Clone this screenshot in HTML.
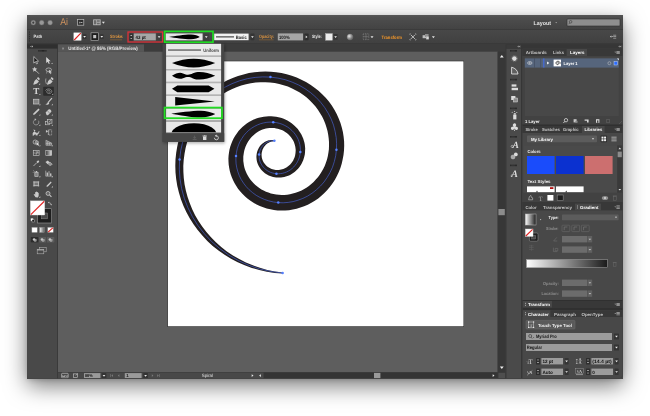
<!DOCTYPE html>
<html lang="en"><head><meta charset="utf-8"><title>Illustrator - Width Profile</title>
<style>
html,body{margin:0;padding:0;background:#ffffff;}
body{width:650px;height:416px;overflow:hidden;position:relative;font-family:"Liberation Sans",sans-serif;}
#shadow{position:absolute;left:27px;top:15px;width:595.5px;height:363.3px;border-radius:4px;background:#464646;
 box-shadow:0 8px 22px rgba(0,0,0,0.52),0 2px 5px rgba(0,0,0,0.16);}
svg{position:absolute;left:0;top:0;will-change:transform;}
svg text{font-family:"Liberation Sans",sans-serif;text-rendering:geometricPrecision;}
</style></head><body>
<div id="shadow"></div>
<svg width="650" height="416" viewBox="0 0 650 416">
<defs><filter id="blur2" x="-20%" y="-20%" width="140%" height="140%"><feGaussianBlur stdDeviation="1.6"/></filter></defs>
<rect x="27.00" y="15.00" width="596.00" height="364.00" fill="#464646" />
<defs><linearGradient id="gt" x1="0" y1="0" x2="0" y2="1"><stop offset="0" stop-color="#565656"/><stop offset="0.15" stop-color="#4e4e4e"/><stop offset="1" stop-color="#434343"/></linearGradient><linearGradient id="gc" x1="0" y1="0" x2="0" y2="1"><stop offset="0" stop-color="#484848"/><stop offset="1" stop-color="#404040"/></linearGradient><linearGradient id="gw" x1="0" y1="0" x2="1" y2="0"><stop offset="0" stop-color="#ffffff"/><stop offset="1" stop-color="#1a1a1a"/></linearGradient><clipPath id="wc"><rect x="27" y="15" width="595.5" height="363.3" rx="4"/></clipPath></defs>
<rect x="27.00" y="15.00" width="596.00" height="14.30" fill="url(#gt)" />
<rect x="27.00" y="29.00" width="596.00" height="0.70" fill="#2c2c2c" />
<rect x="27.00" y="29.60" width="596.00" height="14.40" fill="url(#gc)" />
<rect x="27.00" y="43.60" width="596.00" height="0.60" fill="#303030" />
<g clip-path="url(#wc)">
<rect x="27.00" y="15.00" width="596.00" height="364.00" fill="#464646" />
<rect x="27.00" y="15.00" width="596.00" height="14.30" fill="url(#gt)" />
<rect x="27.00" y="29.00" width="596.00" height="0.70" fill="#2c2c2c" />
<rect x="27.00" y="29.60" width="596.00" height="14.40" fill="url(#gc)" />
<rect x="27.00" y="43.60" width="596.00" height="0.60" fill="#303030" />
<circle cx="33.30" cy="22.70" r="2.40" fill="#989898" stroke="#6a6a6a" stroke-width="0.40" />
<circle cx="41.70" cy="22.70" r="2.40" fill="#989898" stroke="#6a6a6a" stroke-width="0.40" />
<circle cx="50.10" cy="22.70" r="2.40" fill="#989898" stroke="#6a6a6a" stroke-width="0.40" />
<circle cx="33.30" cy="22.70" r="1.10" fill="#3e3e3e" stroke="none" stroke-width="1.00" />
<text x="60.20" y="25.10" font-size="9.80" fill="#cf935f" font-weight="normal" text-anchor="start" textLength="7.8" lengthAdjust="spacingAndGlyphs">Ai</text>
<rect x="77.40" y="19.40" width="6.40" height="5.80" fill="#2e2e2e" stroke="#bdbdbd" stroke-width="0.7"/>
<rect x="79.40" y="21.80" width="0.80" height="1.60" fill="#d0d0d0" />
<rect x="80.60" y="22.20" width="1.80" height="0.80" fill="#d0d0d0" />
<rect x="93.20" y="19.40" width="7.40" height="5.80" fill="#bdbdbd" />
<rect x="94.00" y="20.20" width="2.40" height="4.20" fill="#6a6a6a" />
<rect x="97.00" y="20.20" width="2.80" height="1.60" fill="#6a6a6a" />
<rect x="97.00" y="22.60" width="2.80" height="1.80" fill="#6a6a6a" />
<path d="M101.90 21.85h3.00l-1.50 1.90z" fill="#e0e0e0" stroke="none" stroke-width="1.00" />
<text x="533.60" y="24.50" font-size="5.60" fill="#e4e4e4" font-weight="bold" text-anchor="start" textLength="17.4" lengthAdjust="spacingAndGlyphs">Layout</text>
<path d="M555.30 22.25h1.80l-0.90 1.10z" fill="#bdbdbd" stroke="none" stroke-width="1.00" />
<rect x="567.00" y="19.00" width="53.00" height="7.00" fill="#8e8e8e" rx="0.8" stroke="#2e2e2e" stroke-width="0.6"/>
<circle cx="570.60" cy="21.80" r="1.30" fill="none" stroke="#3a3a3a" stroke-width="0.60" />
<line x1="569.70" y1="22.80" x2="568.80" y2="24.20" stroke="#3a3a3a" stroke-width="0.60" />
<rect x="29.00" y="31.50" width="0.80" height="1.20" fill="#2a2a2a" />
<rect x="29.00" y="33.70" width="0.80" height="1.20" fill="#2a2a2a" />
<rect x="29.00" y="35.90" width="0.80" height="1.20" fill="#2a2a2a" />
<rect x="29.00" y="38.10" width="0.80" height="1.20" fill="#2a2a2a" />
<rect x="29.00" y="40.30" width="0.80" height="1.20" fill="#2a2a2a" />
<text x="33.60" y="38.10" font-size="4.60" fill="#e4e4e4" font-weight="bold" text-anchor="start" textLength="8.7" lengthAdjust="spacingAndGlyphs">Path</text>
<rect x="73.80" y="32.80" width="7.40" height="7.60" fill="#ffffff" stroke="#cfcfcf" stroke-width="0.4"/>
<line x1="74.20" y1="40.00" x2="80.80" y2="33.20" stroke="#e02020" stroke-width="1.10" />
<rect x="82.80" y="34.20" width="3.60" height="4.80" fill="#343434" rx="0.6"/>
<path d="M83.25 35.95h2.70l-1.35 1.70z" fill="#ececec" stroke="none" stroke-width="1.00" />
<rect x="91.00" y="32.80" width="7.40" height="7.60" fill="#1e1e1e" stroke="#b4b4b4" stroke-width="0.6"/>
<rect x="93.20" y="35.00" width="3.00" height="3.20" fill="#c4c4c4" />
<rect x="100.00" y="34.20" width="3.60" height="4.80" fill="#343434" rx="0.6"/>
<path d="M100.45 35.95h2.70l-1.35 1.70z" fill="#ececec" stroke="none" stroke-width="1.00" />
<text x="110.00" y="38.40" font-size="4.70" fill="#dc9440" font-weight="bold" text-anchor="start" textLength="13.4" lengthAdjust="spacingAndGlyphs">Stroke:</text>
<line x1="110.00" y1="39.80" x2="122.00" y2="39.80" stroke="#a8702e" stroke-width="0.50" />
<rect x="129.60" y="33.40" width="3.20" height="7.00" fill="#2e2e2e" rx="0.5"/>
<path d="M130.20 35.89h2.00l-1.00 -1.20z" fill="#dddddd" stroke="none" stroke-width="1.00" />
<path d="M130.20 37.91h2.00l-1.00 1.20z" fill="#dddddd" stroke="none" stroke-width="1.00" />
<rect x="133.80" y="33.40" width="22.00" height="7.00" fill="#a6a6a6" />
<text x="135.60" y="38.70" font-size="4.80" fill="#141414" font-weight="bold" text-anchor="start" textLength="10.2" lengthAdjust="spacingAndGlyphs">43 pt</text>
<rect x="157.00" y="33.60" width="4.20" height="6.60" fill="#3e3e3e" rx="0.6"/>
<path d="M157.75 36.25h2.70l-1.35 1.70z" fill="#ececec" stroke="none" stroke-width="1.00" />
<rect x="128.00" y="32.00" width="34.60" height="10.00" fill="none" stroke="#dc3038" stroke-width="1.3"/>
<rect x="165.60" y="33.40" width="37.00" height="7.00" fill="#e6e6e6" />
<path d="M169.0 36.9 C175 36.2 185 34.5 191 34.6 C195 34.8 198 35.9 199.8 36.9 C198 37.9 195 39.1 191 39.2 C185 39.3 175 37.6 169.0 36.9Z" fill="#000000" stroke="none" stroke-width="1.00" />
<rect x="203.60" y="33.60" width="5.40" height="6.60" fill="#3e3e3e" rx="0.6"/>
<path d="M204.95 36.25h2.70l-1.35 1.70z" fill="#ececec" stroke="none" stroke-width="1.00" />
<rect x="164.60" y="31.40" width="48.40" height="10.80" fill="none" stroke="#1fdc22" stroke-width="1.7"/>
<rect x="214.20" y="33.60" width="34.40" height="6.60" fill="#f2f2f2" />
<line x1="216.00" y1="36.90" x2="234.00" y2="36.90" stroke="#111111" stroke-width="0.90" />
<text x="235.80" y="38.70" font-size="4.70" fill="#222222" font-weight="bold" text-anchor="start" textLength="11" lengthAdjust="spacingAndGlyphs">Basic</text>
<rect x="250.40" y="33.60" width="4.00" height="6.60" fill="#343434" rx="0.6"/>
<path d="M251.05 36.25h2.70l-1.35 1.70z" fill="#ececec" stroke="none" stroke-width="1.00" />
<text x="259.00" y="38.40" font-size="4.70" fill="#dc9440" font-weight="bold" text-anchor="start" textLength="15" lengthAdjust="spacingAndGlyphs">Opacity:</text>
<line x1="259.00" y1="39.80" x2="273.60" y2="39.80" stroke="#a8702e" stroke-width="0.50" />
<rect x="277.80" y="33.40" width="25.20" height="7.00" fill="#a6a6a6" />
<text x="279.00" y="38.70" font-size="4.80" fill="#141414" font-weight="bold" text-anchor="start" textLength="10.6" lengthAdjust="spacingAndGlyphs">100%</text>
<rect x="304.40" y="33.60" width="4.20" height="6.60" fill="#2e2e2e" rx="0.6"/>
<path d="M305.70 35.60v2.60l1.80 -1.30z" fill="#e0e0e0" stroke="none" stroke-width="1.00" />
<text x="312.00" y="38.40" font-size="4.70" fill="#e4e4e4" font-weight="bold" text-anchor="start" textLength="9.6" lengthAdjust="spacingAndGlyphs">Style:</text>
<rect x="325.60" y="33.60" width="6.80" height="6.60" fill="#ececec" stroke="#bdbdbd" stroke-width="0.4"/>
<rect x="333.60" y="34.00" width="4.00" height="5.80" fill="#343434" rx="0.6"/>
<path d="M334.25 36.25h2.70l-1.35 1.70z" fill="#ececec" stroke="none" stroke-width="1.00" />
<defs><radialGradient id="sph" cx="0.35" cy="0.35" r="0.7"><stop offset="0" stop-color="#e8e8e8"/><stop offset="1" stop-color="#5a5a5a"/></radialGradient></defs>
<circle cx="350.00" cy="37.00" r="2.90" fill="url(#sph)" stroke="#9a9a9a" stroke-width="0.30" />
<rect x="363.20" y="33.80" width="5.60" height="5.80" fill="none" stroke="#9a9a9a" stroke-width="0.5" stroke-dasharray="1 0.8"/>
<line x1="366.00" y1="33.80" x2="366.00" y2="39.60" stroke="#9a9a9a" stroke-width="0.40" />
<line x1="363.20" y1="36.70" x2="368.80" y2="36.70" stroke="#9a9a9a" stroke-width="0.40" />
<path d="M370.50 36.25h3.00l-1.50 1.90z" fill="#e0e0e0" stroke="none" stroke-width="1.00" />
<text x="381.60" y="38.50" font-size="4.80" fill="#f0962a" font-weight="bold" text-anchor="start" textLength="20.4" lengthAdjust="spacingAndGlyphs">Transform</text>
<line x1="410.90" y1="34.90" x2="414.90" y2="38.90" stroke="#d8d8d8" stroke-width="0.80" />
<line x1="414.90" y1="34.90" x2="410.90" y2="38.90" stroke="#d8d8d8" stroke-width="0.80" />
<path d="M409.8 34.8v-1h1M415 33.8h1v1M416 39v1h-1M410.8 40h-1v-1" fill="none" stroke="#c8c8c8" stroke-width="0.50" />
<rect x="422.60" y="35.20" width="3.40" height="3.00" fill="#bdbdbd" />
<rect x="425.00" y="34.00" width="3.60" height="3.00" fill="#8e8e8e" />
<rect x="426.20" y="36.60" width="2.60" height="2.80" fill="#d8d8d8" />
<path d="M431.90 36.25h3.00l-1.50 1.90z" fill="#e0e0e0" stroke="none" stroke-width="1.00" />
<path d="M611.40 35.40v2.40l-1.60 -1.20z" fill="#c8c8c8" stroke="none" stroke-width="1.00" />
<rect x="611.60" y="36.20" width="1.20" height="0.80" fill="#c8c8c8" />
<rect x="613.20" y="34.80" width="3.00" height="0.70" fill="#b0b0b0" />
<rect x="613.20" y="36.30" width="3.00" height="0.70" fill="#b0b0b0" />
<rect x="613.20" y="37.80" width="3.00" height="0.70" fill="#b0b0b0" />
<rect x="27.00" y="44.20" width="30.60" height="335.00" fill="#494949" />
<rect x="27.00" y="44.20" width="30.60" height="4.40" fill="#2f2f2f" />
<rect x="57.40" y="44.20" width="0.60" height="335.00" fill="#333333" />
<path d="M30.2 46.4l1.2 -1v2zM31.8 46.4l1.2 -1v2z" fill="#b8b8b8" stroke="none" stroke-width="1.00" />
<rect x="38.40" y="50.00" width="0.80" height="1.60" fill="#1c1c1c" />
<rect x="39.60" y="50.00" width="0.80" height="1.60" fill="#1c1c1c" />
<rect x="40.80" y="50.00" width="0.80" height="1.60" fill="#1c1c1c" />
<rect x="42.00" y="50.00" width="0.80" height="1.60" fill="#1c1c1c" />
<rect x="43.20" y="50.00" width="0.80" height="1.60" fill="#1c1c1c" />
<rect x="44.40" y="50.00" width="0.80" height="1.60" fill="#1c1c1c" />
<rect x="45.60" y="50.00" width="0.80" height="1.60" fill="#1c1c1c" />
<g transform="scale(0.860)" opacity="0.92">
<path d="M39.29 65.75l0 7.6l1.9 -1.7l1.3 2.7l1.2 -0.5l-1.3 -2.6l2.4 -0.2z" fill="#161616" stroke="#ececec" stroke-width="0.75" />
<path d="M53.73 66.15l0 7.2l1.8 -1.6l1.2 2.6l1.1 -0.5l-1.2 -2.5l2.3 -0.2z" fill="#e4e4e4" stroke="none" stroke-width="1.00" />
<path d="M61.03 74.55h-1.6l1.6 -1.6z" fill="#e0e0e0" stroke="none" stroke-width="1.00" />
<line x1="41.49" y1="81.90" x2="45.29" y2="85.70" stroke="#d6d6d6" stroke-width="0.90" />
<path d="M40.29 77.50l0.9 2.0l2.2 0.3l-1.7 1.4l0.5 2.2l-1.9 -1.2l-1.9 1.2l0.5 -2.2l-1.7 -1.4l2.2 -0.3z" fill="#d6d6d6" stroke="none" stroke-width="1.00" />
<ellipse cx="56.63" cy="81.10" rx="3.2" ry="2.1" fill="none" stroke="#d6d6d6" stroke-width="0.8"/>
<path d="M56.83 80.90l0 4.6l1.2 -1l0.9 1.8l0.8 -0.4l-0.9 -1.7l1.6 -0.1z" fill="#d6d6d6" stroke="none" stroke-width="1.00" />
<line x1="54.63" y1="82.90" x2="54.23" y2="85.50" stroke="#d6d6d6" stroke-width="0.60" />
<path d="M40.09 94.06l2.2 -2.2l3 3l-2.2 2.2l-3.8 1.6l-0.6 -0.6zM42.89 91.06l1.4 -1.4l2.2 2.2l-1.4 1.4z" fill="#d6d6d6" stroke="none" stroke-width="1.00" />
<path d="M46.69 98.46h-1.6l1.6 -1.6z" fill="#e0e0e0" stroke="none" stroke-width="1.00" />
<path d="M56.03 94.06l2.2 -2.2l3 3l-2.2 2.2l-3.8 1.6l-0.6 -0.6zM58.83 91.06l1.4 -1.4l2.2 2.2l-1.4 1.4z" fill="#d6d6d6" stroke="none" stroke-width="1.00" />
<path d="M53.43 91.26q-1.2 3 0.6 6.4" fill="none" stroke="#d6d6d6" stroke-width="0.70" />
<text x="42.09" y="109.71" font-size="10.50" fill="#e2e2e2" font-weight="bold" text-anchor="middle" style="font-family:Liberation Serif,serif">T</text>
<path d="M46.89 110.61h-1.6l1.6 -1.6z" fill="#e0e0e0" stroke="none" stroke-width="1.00" />
<rect x="50.23" y="100.81" width="12.40" height="10.40" fill="#2a2a2a" rx="0.8"/>
<path d="M56.25 106.62L56.23 106.73L56.25 106.85L56.31 106.97L56.40 107.09L56.53 107.19L56.70 107.27L56.89 107.32L57.11 107.34L57.34 107.33L57.56 107.27L57.78 107.17L57.98 107.03L58.14 106.85L58.26 106.64L58.32 106.41L58.33 106.16L58.26 105.91L58.13 105.66L57.94 105.44L57.68 105.24L57.36 105.08L57.01 104.98L56.62 104.93L56.22 104.95L55.81 105.04L55.43 105.19L55.09 105.41L54.80 105.68L54.57 106.01L54.43 106.37L54.39 106.76L54.44 107.15L54.59 107.54L54.85 107.91L55.20 108.23L55.63 108.50L56.13 108.69L56.68 108.81L57.26 108.84L57.85 108.77L58.41 108.60L58.94 108.35L59.40 108.00L59.77 107.59L60.04 107.11L60.19 106.59L60.20 106.05L60.08 105.51L59.82 104.99L59.42 104.51L58.91 104.10L58.30 103.78L57.61 103.55L56.87 103.44L56.09 103.44L55.33 103.58L54.60 103.83L53.94 104.20L53.38 104.68L52.94 105.24" fill="none" stroke="#c2c2c2" stroke-width="0.70" />
<path d="M61.83 110.21h-1.6l1.6 -1.6z" fill="#e0e0e0" stroke="none" stroke-width="1.00" />
<rect x="38.89" y="115.36" width="6.40" height="5.60" fill="#8a8a8a" stroke="#dcdcdc" stroke-width="0.7"/>
<path d="M46.89 122.36h-1.6l1.6 -1.6z" fill="#e0e0e0" stroke="none" stroke-width="1.00" />
<line x1="60.43" y1="114.16" x2="56.03" y2="118.96" stroke="#d6d6d6" stroke-width="1.30" />
<path d="M55.73 118.56q-0.4 2.2 -3.0 2.8q1.6 0.8 3.4 0.2q1.4 -0.8 1.0 -2.4z" fill="#d6d6d6" stroke="none" stroke-width="1.00" />
<path d="M61.43 122.36h-1.6l1.6 -1.6z" fill="#e0e0e0" stroke="none" stroke-width="1.00" />
<path d="M39.09 131.72l5.6 -5.6l1.4 1.4l-5.6 5.6l-2 0.6z" fill="#d6d6d6" stroke="none" stroke-width="1.00" />
<path d="M46.89 134.32h-1.6l1.6 -1.6z" fill="#e0e0e0" stroke="none" stroke-width="1.00" />
<path d="M53.03 130.72l3.4 -3.4q1 -0.8 2 0.1l1 1q0.8 1 0 1.9l-3.4 3.4q-1 0.8 -1.9 0z" fill="#d6d6d6" stroke="none" stroke-width="1.00" />
<line x1="55.23" y1="128.92" x2="58.03" y2="131.92" stroke="#5a5a5a" stroke-width="0.60" />
<path d="M61.43 134.32h-1.6l1.6 -1.6z" fill="#e0e0e0" stroke="none" stroke-width="1.00" />
<path d="M41.89 138.87a3.2 3.2 0 1 0 2.8 1.5" fill="none" stroke="#b4b4b4" stroke-width="0.80" />
<path d="M42.29 138.87l-1.8 -1.4l0 2.8z" fill="#c4c4c4" stroke="none" stroke-width="1.00" />
<path d="M46.89 146.27h-1.6l1.6 -1.6z" fill="#e0e0e0" stroke="none" stroke-width="1.00" />
<rect x="53.03" y="141.47" width="4.40" height="3.60" fill="none" stroke="#d6d6d6" stroke-width="0.7"/>
<rect x="55.03" y="138.87" width="5.40" height="4.40" fill="#5a5a5a" stroke="#d6d6d6" stroke-width="0.7"/>
<line x1="56.83" y1="142.07" x2="59.43" y2="139.67" stroke="#d6d6d6" stroke-width="0.70" />
<path d="M61.43 146.27h-1.6l1.6 -1.6z" fill="#e0e0e0" stroke="none" stroke-width="1.00" />
<path d="M38.29 154.62q1.6 -2.8 3.4 -0.4q1.8 2.2 3.8 -1.6q-0.6 4.4 -3.6 3.6q-1.8 -0.8 -3.6 1.6z" fill="#d6d6d6" stroke="#d6d6d6" stroke-width="0.50" />
<path d="M38.89 150.42l2.4 1.2l-1.4 1.6z" fill="#d6d6d6" stroke="none" stroke-width="1.00" />
<path d="M42.49 154.62l1.6 2.6l-2.6 0.2z" fill="#d6d6d6" stroke="none" stroke-width="1.00" />
<path d="M46.89 158.22h-1.6l1.6 -1.6z" fill="#e0e0e0" stroke="none" stroke-width="1.00" />
<path d="M53.43 151.02l2.6 1.6l-2.6 1.6z" fill="#d6d6d6" stroke="none" stroke-width="1.00" />
<rect x="56.83" y="150.82" width="3.20" height="6.20" fill="none" stroke="#d6d6d6" stroke-width="0.7" stroke-dasharray="1 0.6"/>
<line x1="56.23" y1="150.82" x2="56.23" y2="157.02" stroke="#d6d6d6" stroke-width="0.70" />
<circle cx="40.89" cy="165.18" r="2.40" fill="none" stroke="#d6d6d6" stroke-width="0.80" />
<circle cx="42.89" cy="165.78" r="2.00" fill="#8a8a8a" stroke="#d6d6d6" stroke-width="0.60" />
<path d="M42.69 165.58l0 3.6l1 -0.8l0.7 1.4l0.7 -0.3l-0.7 -1.4l1.3 -0.1z" fill="#f0f0f0" stroke="none" stroke-width="1.00" />
<path d="M46.89 170.18h-1.6l1.6 -1.6z" fill="#e0e0e0" stroke="none" stroke-width="1.00" />
<path d="M53.43 168.98l0 -6l6.6 3.4l0 2.6zM55.43 168.98l0 -4.6M57.63 168.98l0 -3.4M53.43 166.78l6.6 -0.2" fill="#7a7a7a" stroke="#d6d6d6" stroke-width="0.60" />
<path d="M61.43 170.18h-1.6l1.6 -1.6z" fill="#e0e0e0" stroke="none" stroke-width="1.00" />
<rect x="38.69" y="175.13" width="6.80" height="5.60" fill="none" stroke="#d6d6d6" stroke-width="0.7"/>
<path d="M41.89 175.13q1 2.8 0 5.6M38.69 177.73q3.4 1 6.8 0" fill="none" stroke="#d6d6d6" stroke-width="0.60" />
<rect x="42.89" y="176.13" width="1.60" height="1.40" fill="#c0c0c0" />
<defs><linearGradient id="tg" x1="0" y1="0" x2="1" y2="0"><stop offset="0" stop-color="#3a3a3a"/><stop offset="1" stop-color="#f0f0f0"/></linearGradient></defs>
<rect x="53.23" y="175.13" width="6.80" height="5.60" fill="url(#tg)" stroke="#d6d6d6" stroke-width="0.7"/>
<line x1="38.89" y1="193.08" x2="42.49" y2="189.48" stroke="#d6d6d6" stroke-width="0.90" />
<path d="M42.29 188.28l1.4 -1.4q1 -0.6 1.6 0q0.6 0.8 0 1.6l-1.4 1.4z" fill="#d6d6d6" stroke="none" stroke-width="1.00" />
<path d="M46.89 194.08h-1.6l1.6 -1.6z" fill="#e0e0e0" stroke="none" stroke-width="1.00" />
<path d="M52.83 188.28l2.8 -1.6l2.6 2.6l-2.8 1.6z" fill="#d6d6d6" stroke="none" stroke-width="1.00" />
<path d="M55.43 190.08l2.8 -1.6l2.6 2.6l-2.8 1.6z" fill="#9a9a9a" stroke="#e0e0e0" stroke-width="0.50" />
<rect x="40.49" y="200.64" width="3.80" height="4.60" fill="#8a8a8a" stroke="#d6d6d6" stroke-width="0.7"/>
<rect x="41.49" y="198.84" width="1.80" height="1.60" fill="#d6d6d6" />
<circle cx="39.09" cy="198.64" r="0.50" fill="#d6d6d6" stroke="none" stroke-width="1.00" />
<circle cx="38.49" cy="200.44" r="0.50" fill="#d6d6d6" stroke="none" stroke-width="1.00" />
<circle cx="39.89" cy="199.64" r="0.45" fill="#d6d6d6" stroke="none" stroke-width="1.00" />
<path d="M46.89 206.04h-1.6l1.6 -1.6z" fill="#e0e0e0" stroke="none" stroke-width="1.00" />
<path d="M53.23 198.44v6.4h7" fill="none" stroke="#d6d6d6" stroke-width="0.70" />
<rect x="54.23" y="200.64" width="1.50" height="3.80" fill="#d6d6d6" />
<rect x="56.23" y="199.04" width="1.50" height="5.40" fill="#9a9a9a" />
<rect x="58.23" y="201.64" width="1.50" height="2.80" fill="#d6d6d6" />
<path d="M61.43 206.04h-1.6l1.6 -1.6z" fill="#e0e0e0" stroke="none" stroke-width="1.00" />
<rect x="39.49" y="211.59" width="5.20" height="4.40" fill="#7a7a7a" stroke="#d6d6d6" stroke-width="0.7"/>
<path d="M38.29 211.59h7.6M38.29 215.99h7.6M39.49 210.39v6.8M44.69 210.39v6.8" fill="none" stroke="#d6d6d6" stroke-width="0.50" />
<path d="M53.63 216.59l5.4 -5.4l1 1l-4.6 5z" fill="#d6d6d6" stroke="none" stroke-width="1.00" />
<path d="M61.43 217.99h-1.6l1.6 -1.6z" fill="#e0e0e0" stroke="none" stroke-width="1.00" />
<path d="M41.29 229.34q-1.6 -2.4 -2.2 -3.4q0.4 -0.8 1.2 0l0.6 0.6l0 -3q0.5 -0.7 1 0l0.1 -0.6q0.5 -0.6 1 0l0.1 0.4q0.5 -0.5 1 0.1l0 0.8q0.6 -0.4 0.9 0.2l0 3q-0.2 1.4 -1 2.2z" fill="#d6d6d6" stroke="none" stroke-width="1.00" />
<path d="M46.89 229.94h-1.6l1.6 -1.6z" fill="#e0e0e0" stroke="none" stroke-width="1.00" />
<circle cx="55.83" cy="224.94" r="2.30" fill="#6a6a6a" stroke="#d6d6d6" stroke-width="0.90" />
<line x1="57.53" y1="226.64" x2="59.83" y2="228.94" stroke="#d6d6d6" stroke-width="1.20" />
</g>
<rect x="37.30" y="208.70" width="14.40" height="14.30" fill="#1e1e1e" stroke="#9a9a9a" stroke-width="0.6"/>
<rect x="41.60" y="213.00" width="5.80" height="5.80" fill="#494949" stroke="#8a8a8a" stroke-width="0.5"/>
<rect x="30.40" y="200.90" width="14.30" height="14.10" fill="#ffffff" stroke="#e0e0e0" stroke-width="0.4"/>
<line x1="30.80" y1="214.60" x2="44.30" y2="201.30" stroke="#e02828" stroke-width="1.20" />
<path d="M48.6 202.6q2.4 -0.2 2.6 2.2" fill="none" stroke="#bdbdbd" stroke-width="0.60" />
<path d="M49.2 201.6l-1.4 1l1.4 1zM50.2 204.2l1 1.4l1 -1.4z" fill="#bdbdbd" stroke="none" stroke-width="1.00" />
<rect x="30.80" y="218.40" width="2.40" height="2.40" fill="#ffffff" />
<rect x="32.00" y="219.80" width="2.20" height="2.20" fill="#1c1c1c" stroke="#d0d0d0" stroke-width="0.4"/>
<rect x="31.90" y="227.40" width="5.30" height="5.00" fill="#ffffff" stroke="#9a9a9a" stroke-width="0.4"/>
<rect x="39.70" y="227.40" width="5.00" height="5.00" fill="url(#tg2)" stroke="#9a9a9a" stroke-width="0.4"/>
<defs><linearGradient id="tg2" x1="0" y1="0" x2="1" y2="0"><stop offset="0" stop-color="#f0f0f0"/><stop offset="1" stop-color="#555"/></linearGradient></defs>
<rect x="47.80" y="227.40" width="5.40" height="5.00" fill="#ffffff" stroke="#9a9a9a" stroke-width="0.4"/>
<line x1="48.20" y1="232.00" x2="52.80" y2="227.80" stroke="#e02828" stroke-width="1.10" />
<rect x="30.70" y="237.00" width="23.70" height="5.60" fill="#5a5a5a" rx="0.8"/>
<rect x="30.70" y="237.00" width="7.80" height="5.60" fill="#2c2c2c" rx="0.8"/>
<line x1="38.60" y1="237.00" x2="38.60" y2="242.60" stroke="#3a3a3a" stroke-width="0.50" />
<line x1="46.50" y1="237.00" x2="46.50" y2="242.60" stroke="#3a3a3a" stroke-width="0.50" />
<circle cx="34.10" cy="239.50" r="1.30" fill="#c8c8c8" stroke="none" stroke-width="1.00" />
<rect x="34.30" y="239.50" width="2.00" height="1.90" fill="#9a9a9a" stroke="#d0d0d0" stroke-width="0.3"/>
<circle cx="42.00" cy="239.50" r="1.30" fill="#c8c8c8" stroke="none" stroke-width="1.00" />
<rect x="42.20" y="239.50" width="2.00" height="1.90" fill="#9a9a9a" stroke="#d0d0d0" stroke-width="0.3"/>
<circle cx="49.90" cy="239.50" r="1.30" fill="#c8c8c8" stroke="none" stroke-width="1.00" />
<rect x="50.10" y="239.50" width="2.00" height="1.90" fill="#9a9a9a" stroke="#d0d0d0" stroke-width="0.3"/>
<rect x="39.60" y="247.40" width="6.60" height="4.40" fill="#494949" stroke="#b4b4b4" stroke-width="0.55"/>
<rect x="37.20" y="249.40" width="6.60" height="4.40" fill="#494949" stroke="#b4b4b4" stroke-width="0.55"/>
<rect x="37.20" y="249.40" width="6.60" height="1.00" fill="#b4b4b4" />
<rect x="58.00" y="44.20" width="448.00" height="7.60" fill="#3c3c3c" />
<rect x="58.00" y="44.40" width="86.00" height="7.40" fill="#565656" />
<text x="63.00" y="49.60" font-size="4.60" fill="#bdbdbd" font-weight="normal" text-anchor="middle" >×</text>
<text x="68.20" y="49.80" font-size="4.90" fill="#e6e6e6" font-weight="bold" text-anchor="start" textLength="69.6" lengthAdjust="spacingAndGlyphs">Untitled-1* @ 86% (RGB/Preview)</text>
<rect x="58.00" y="51.70" width="439.80" height="321.00" fill="#5e5e5e" />
<rect x="167.40" y="60.80" width="296.60" height="266.00" fill="#1e1e1e" />
<rect x="167.90" y="61.30" width="295.60" height="265.00" fill="#ffffff" />
<rect x="497.80" y="51.70" width="7.90" height="328.00" fill="#373737" />
<rect x="497.50" y="51.70" width="0.50" height="328.00" fill="#404040" />
<path d="M499.90 57.40h3.80l-1.90 -2.40z" fill="#f0f0f0" stroke="none" stroke-width="1.00" />
<path d="M499.90 366.60h3.80l-1.90 2.40z" fill="#f0f0f0" stroke="none" stroke-width="1.00" />
<rect x="498.40" y="209.00" width="6.40" height="6.20" fill="#8c8c8c" />
<rect x="498.40" y="372.80" width="6.80" height="5.60" fill="#4e4e4e" />
<rect x="58.00" y="372.50" width="439.80" height="6.20" fill="#484848" />
<rect x="58.00" y="372.10" width="439.80" height="0.50" fill="#333333" />
<rect x="263.60" y="372.50" width="234.20" height="6.20" fill="#343434" />
<rect x="374.00" y="372.90" width="6.40" height="5.40" fill="#9a9a9a" />
<path d="M251.70 374.20v2.80l1.80 -1.40z" fill="#e8e8e8" stroke="none" stroke-width="1.00" />
<path d="M260.90 374.20v2.80l-1.80 -1.40z" fill="#e8e8e8" stroke="none" stroke-width="1.00" />
<path d="M492.70 374.20v2.80l1.80 -1.40z" fill="#e8e8e8" stroke="none" stroke-width="1.00" />
<text x="201.80" y="377.30" font-size="4.60" fill="#e0e0e0" font-weight="normal" text-anchor="start" textLength="11.2" lengthAdjust="spacingAndGlyphs">Spiral</text>
<rect x="61.60" y="373.30" width="6.60" height="4.60" fill="none" rx="0.8" stroke="#d0d0d0" stroke-width="0.6"/>
<text x="64.90" y="377.10" font-size="2.60" fill="#d0d0d0" font-weight="bold" text-anchor="middle" >GPU</text>
<rect x="73.40" y="373.90" width="4.20" height="3.80" fill="none" stroke="#c8c8c8" stroke-width="0.6"/>
<path d="M75.6 375.5l2.4 -2.2" fill="none" stroke="#c8c8c8" stroke-width="0.60" />
<rect x="84.00" y="373.10" width="16.40" height="5.00" fill="#9a9a9a" />
<text x="85.00" y="377.30" font-size="4.40" fill="#1a1a1a" font-weight="bold" text-anchor="start" textLength="7.6" lengthAdjust="spacingAndGlyphs">86%</text>
<rect x="101.60" y="373.10" width="4.80" height="5.00" fill="#343434" rx="0.6"/>
<path d="M102.65 374.95h2.70l-1.35 1.70z" fill="#ececec" stroke="none" stroke-width="1.00" />
<rect x="110.40" y="374.10" width="0.60" height="3.00" fill="#7a7a7a" />
<path d="M113.00 374.30v2.60l-1.60 -1.30z" fill="#7a7a7a" stroke="none" stroke-width="1.00" />
<path d="M119.40 374.30v2.60l-1.60 -1.30z" fill="#7a7a7a" stroke="none" stroke-width="1.00" />
<rect x="124.80" y="373.10" width="16.80" height="5.00" fill="#9a9a9a" />
<text x="126.20" y="377.30" font-size="4.40" fill="#1a1a1a" font-weight="bold" text-anchor="start" >1</text>
<rect x="143.20" y="373.10" width="4.80" height="5.00" fill="#343434" rx="0.6"/>
<path d="M144.25 374.95h2.70l-1.35 1.70z" fill="#ececec" stroke="none" stroke-width="1.00" />
<path d="M151.80 374.30v2.60l1.60 -1.30z" fill="#7a7a7a" stroke="none" stroke-width="1.00" />
<path d="M157.20 374.30v2.60l1.60 -1.30z" fill="#7a7a7a" stroke="none" stroke-width="1.00" />
<rect x="159.20" y="374.10" width="0.60" height="3.00" fill="#7a7a7a" />
<path d="M282.7 272.5L274.9 271.4L267.3 269.9L259.9 267.8L252.8 265.3L245.9 262.4L239.2 259.1L232.9 255.4L226.9 251.4L221.2 247.0L215.9 242.3L211.0 237.3L206.4 232.1L202.2 226.6L198.5 221.0L195.1 215.2L192.2 209.2L189.7 203.1L187.6 197.0L185.9 190.8L184.6 184.6L183.8 178.3L183.4 172.1L183.3 166.0L183.7 159.9L184.5 153.9L185.6 148.0L187.1 142.3L188.9 136.8L191.0 131.4L193.5 126.2L196.3 121.3L199.4 116.6L202.7 112.2L206.3 108.0L210.1 104.1L214.1 100.5L218.3 97.2L222.6 94.3L227.1 91.6L231.7 89.3L236.4 87.3L241.2 85.6L246.0 84.3L250.8 83.3L255.7 82.6L260.5 82.2L265.3 82.2L270.0 82.5L274.7 83.1L279.2 84.0L283.6 85.2L287.9 86.6L292.1 88.4L296.0 90.4L299.8 92.6L303.4 95.0L306.7 97.6L309.9 100.4L312.8 103.4L315.5 106.5L317.9 109.8L320.1 113.2L322.1 116.6L323.8 120.1L325.3 123.7L326.5 127.4L327.5 131.0L328.2 134.7L328.7 138.4L329.0 142.0L329.0 145.6L328.9 149.2L328.4 152.7L327.8 156.2L327.0 159.5L325.9 162.8L324.7 165.9L323.2 168.9L321.6 171.8L319.9 174.6L317.9 177.2L315.8 179.6L313.6 181.9L311.3 184.0L308.9 186.0L306.4 187.7L303.8 189.3L301.1 190.7L298.4 191.8L295.6 192.8L292.8 193.6L290.0 194.2L287.2 194.7L284.4 194.9L281.6 195.0L278.9 194.8L276.2 194.5L273.5 194.1L270.9 193.4L268.4 192.6L266.0 191.7L263.6 190.6L261.4 189.4L259.3 188.0L257.3 186.6L255.4 185.0L253.6 183.3L252.0 181.6L250.5 179.7L249.1 177.8L247.9 175.8L246.8 173.7L245.8 171.6L245.0 169.5L244.4 167.4L243.9 165.2L243.6 163.1L243.3 160.9L243.3 158.7L243.3 156.6L243.6 154.5L243.9 152.5L244.3 150.5L244.9 148.5L245.6 146.6L246.4 144.8L247.3 143.0L248.3 141.3L249.4 139.7L250.5 138.2L251.8 136.7L253.2 135.4L254.6 134.2L256.1 133.0L257.6 132.0L259.2 131.1L260.8 130.3L262.5 129.6L264.2 129.0L265.9 128.6L267.6 128.3L269.4 128.1L271.1 128.0L272.8 128.0L274.5 128.1L276.1 128.4L277.8 128.7L279.3 129.2L280.9 129.7L282.4 130.3L283.8 131.1L285.2 131.9L286.4 132.8L287.7 133.8L288.8 134.8L289.9 135.9L290.8 137.0L291.7 138.2L292.5 139.5L293.3 140.8L293.9 142.1L294.4 143.4L294.8 144.8L295.2 146.2L295.4 147.5L295.6 148.9L295.7 150.3L295.6 151.7L295.5 153.0L295.3 154.3L295.1 155.6L294.7 156.9L294.3 158.1L293.7 159.3L293.2 160.4L292.5 161.5L291.8 162.5L291.0 163.5L290.2 164.4L289.3 165.3L288.4 166.0L287.4 166.8L286.4 167.4L285.4 168.0L284.4 168.5L283.3 168.9L282.2 169.2L281.1 169.5L280.0 169.7L278.9 169.9L277.8 169.9L276.7 169.9L275.7 169.9L274.6 169.7L273.6 169.5L272.6 169.2L271.6 168.9L270.6 168.5L269.7 168.0L268.8 167.5L268.0 167.0L267.2 166.4L266.4 165.7L265.7 165.0L265.1 164.3L264.5 163.5L263.9 162.7L263.4 161.9L263.0 161.1L262.6 160.2L262.3 159.3L262.0 158.4L261.8 157.5L261.7 156.6L261.6 155.7L261.6 154.8L261.6 153.9L261.7 153.0L261.9 152.1L262.1 151.3L262.3 150.4L262.6 149.6L263.0 148.8L263.4 148.0L263.8 147.3L264.3 146.6L264.8 145.9L265.4 145.2L266.0 144.6L266.7 144.1L267.3 143.6L268.0 143.1L268.8 142.7L269.5 142.3L270.3 142.0L271.1 141.7L271.9 141.5L272.7 141.4L273.5 141.3L274.4 141.2L274.4 140.2L273.5 140.1L272.6 140.0L271.7 140.0L270.8 140.0L269.8 140.2L268.9 140.3L267.9 140.6L267.0 140.9L266.1 141.3L265.1 141.7L264.2 142.3L263.4 142.9L262.5 143.5L261.7 144.2L260.9 145.0L260.2 145.8L259.5 146.8L258.9 147.7L258.4 148.7L257.9 149.8L257.4 150.9L257.1 152.0L256.8 153.2L256.6 154.4L256.5 155.6L256.4 156.9L256.5 158.2L256.6 159.4L256.8 160.7L257.1 162.0L257.5 163.2L258.0 164.5L258.6 165.7L259.3 166.9L260.0 168.1L260.8 169.2L261.7 170.3L262.7 171.3L263.8 172.3L264.9 173.2L266.1 174.0L267.4 174.8L268.7 175.4L270.1 176.0L271.6 176.6L273.1 177.0L274.6 177.3L276.2 177.5L277.7 177.6L279.3 177.6L281.0 177.5L282.6 177.3L284.2 177.0L285.8 176.6L287.4 176.1L289.0 175.4L290.5 174.7L292.0 173.8L293.5 172.8L294.9 171.8L296.2 170.6L297.5 169.3L298.7 168.0L299.8 166.5L300.8 165.0L301.7 163.4L302.5 161.7L303.3 159.9L303.9 158.1L304.4 156.3L304.8 154.4L305.0 152.4L305.1 150.4L305.2 148.4L305.0 146.4L304.8 144.4L304.4 142.4L303.8 140.4L303.2 138.4L302.3 136.4L301.4 134.5L300.3 132.7L299.1 130.9L297.8 129.1L296.3 127.5L294.8 125.9L293.1 124.4L291.3 123.0L289.4 121.7L287.4 120.6L285.3 119.5L283.1 118.6L280.8 117.8L278.5 117.2L276.1 116.7L273.7 116.4L271.2 116.2L268.7 116.2L266.2 116.4L263.7 116.7L261.2 117.2L258.7 117.8L256.2 118.6L253.7 119.6L251.3 120.8L249.0 122.1L246.7 123.6L244.5 125.3L242.4 127.1L240.4 129.0L238.5 131.1L236.8 133.4L235.2 135.8L233.7 138.3L232.4 140.9L231.3 143.7L230.3 146.5L229.5 149.4L229.0 152.4L228.6 155.5L228.4 158.6L228.5 161.7L228.7 164.8L229.2 168.0L229.8 171.1L230.7 174.2L231.8 177.3L233.1 180.3L234.6 183.2L236.3 186.1L238.2 188.9L240.3 191.5L242.6 194.1L245.1 196.5L247.7 198.7L250.5 200.8L253.5 202.7L256.6 204.5L259.8 206.0L263.2 207.3L266.7 208.4L270.3 209.3L273.9 210.0L277.6 210.4L281.4 210.6L285.2 210.5L289.0 210.2L292.8 209.6L296.6 208.7L300.4 207.6L304.1 206.3L307.8 204.7L311.4 202.8L314.8 200.7L318.2 198.4L321.4 195.8L324.4 193.0L327.3 190.0L330.0 186.8L332.6 183.3L334.9 179.7L336.9 175.9L338.8 172.0L340.4 167.9L341.7 163.7L342.7 159.3L343.5 154.9L344.0 150.4L344.2 145.8L344.1 141.2L343.6 136.6L342.9 132.0L341.8 127.4L340.4 122.8L338.7 118.4L336.7 114.0L334.4 109.7L331.8 105.6L328.9 101.6L325.7 97.8L322.2 94.2L318.5 90.8L314.6 87.7L310.4 84.7L306.0 82.1L301.4 79.7L296.7 77.6L291.8 75.8L286.7 74.3L281.5 73.1L276.2 72.2L270.9 71.7L265.4 71.5L259.9 71.7L254.4 72.2L248.9 73.1L243.5 74.4L238.0 76.0L232.7 78.0L227.4 80.3L222.3 83.0L217.3 86.1L212.5 89.5L207.9 93.3L203.5 97.3L199.3 101.7L195.4 106.4L191.8 111.4L188.5 116.7L185.5 122.2L182.9 127.9L180.6 133.8L178.7 140.0L177.3 146.3L176.2 152.7L175.5 159.2L175.3 165.8L175.5 172.5L176.2 179.2L177.3 185.9L178.9 192.6L180.9 199.2L183.4 205.7L186.3 212.0L189.7 218.2L193.5 224.3L197.7 230.1L202.3 235.6L207.3 240.9L212.7 245.9L218.5 250.5L224.6 254.8L231.0 258.7L237.7 262.2L244.7 265.2L251.9 267.9L259.3 270.0L266.9 271.7L274.7 272.9L282.6 273.5Z" fill="#231f20" stroke="none" stroke-width="1.00" />
<path d="M282.6 273.0L270.9 271.5L259.6 268.9L248.8 265.3L238.5 260.6L228.8 255.1L219.9 248.7L211.7 241.6L204.4 233.8L197.9 225.5L192.4 216.7L187.8 207.5L184.2 198.1L181.6 188.5L180.0 178.8L179.3 169.1L179.6 159.5L180.8 150.2L182.9 141.1L185.8 132.4L189.5 124.2L194.0 116.5L199.1 109.3L204.7 102.8L211.0 96.9L217.6 91.7L224.7 87.3L232.0 83.7L239.6 80.8L247.3 78.7L255.1 77.4L262.8 76.9L270.4 77.1L277.9 78.1L285.2 79.7L292.1 82.1L298.7 85.0L304.9 88.6L310.7 92.7L315.9 97.2L320.6 102.2L324.7 107.5L328.2 113.2L331.2 119.1L333.5 125.1L335.1 131.3L336.2 137.5L336.6 143.7L336.4 149.8L335.7 155.8L334.3 161.6L332.5 167.2L330.1 172.4L327.2 177.4L324.0 182.0L320.3 186.2L316.3 189.9L312.1 193.2L307.6 196.1L302.9 198.4L298.0 200.2L293.1 201.6L288.1 202.4L283.1 202.8L278.2 202.6L273.5 202.0L268.8 200.9L264.4 199.4L260.1 197.5L256.2 195.3L252.5 192.6L249.1 189.7L246.1 186.5L243.5 183.1L241.2 179.5L239.3 175.7L237.9 171.9L236.8 167.9L236.1 163.9L235.9 160.0L236.0 156.0L236.5 152.2L237.3 148.5L238.5 144.9L240.0 141.5L241.9 138.4L243.9 135.4L246.3 132.7L248.8 130.3L251.6 128.2L254.5 126.4L257.5 124.9L260.6 123.7L263.7 122.9L266.9 122.3L270.1 122.1L273.2 122.2L276.3 122.6L279.3 123.3L282.1 124.2L284.9 125.5L287.4 126.9L289.8 128.6L291.9 130.5L293.8 132.5L295.5 134.7L297.0 137.0L298.2 139.4L299.1 141.9L299.8 144.4L300.2 147.0L300.4 149.5L300.3 152.0L300.0 154.5L299.5 156.9L298.7 159.2L297.7 161.3L296.6 163.4L295.2 165.2L293.7 167.0L292.1 168.5L290.3 169.9L288.5 171.0L286.5 172.0L284.6 172.7L282.5 173.3L280.5 173.6L278.5 173.8L276.5 173.7L274.5 173.5L272.6 173.0L270.7 172.4L269.0 171.6L267.4 170.7L265.9 169.6L264.5 168.4L263.3 167.1L262.2 165.7L261.3 164.2L260.5 162.7L259.9 161.1L259.4 159.5L259.2 157.8L259.1 156.2L259.1 154.6L259.3 153.0L259.7 151.5L260.1 150.0L260.8 148.6L261.5 147.3L262.4 146.1L263.3 145.0L264.4 144.0L265.5 143.2L266.7 142.4L267.9 141.8L269.2 141.3L270.5 141.0L271.8 140.8L273.1 140.7L274.4 140.7" fill="none" stroke="#4f6ff5" stroke-width="0.55" />
<circle cx="282.63" cy="273.02" r="1.25" fill="#5580ff" stroke="none" stroke-width="1.00" />
<circle cx="179.62" cy="159.55" r="1.25" fill="#5580ff" stroke="none" stroke-width="1.00" />
<circle cx="270.44" cy="77.10" r="1.25" fill="#5580ff" stroke="none" stroke-width="1.00" />
<circle cx="336.43" cy="149.79" r="1.25" fill="#5580ff" stroke="none" stroke-width="1.00" />
<circle cx="278.25" cy="202.61" r="1.25" fill="#5580ff" stroke="none" stroke-width="1.00" />
<circle cx="235.97" cy="156.04" r="1.25" fill="#5580ff" stroke="none" stroke-width="1.00" />
<circle cx="273.25" cy="122.20" r="1.25" fill="#5580ff" stroke="none" stroke-width="1.00" />
<circle cx="300.33" cy="152.04" r="1.25" fill="#5580ff" stroke="none" stroke-width="1.00" />
<circle cx="276.45" cy="173.72" r="1.25" fill="#5580ff" stroke="none" stroke-width="1.00" />
<circle cx="259.10" cy="154.60" r="1.25" fill="#5580ff" stroke="none" stroke-width="1.00" />
<circle cx="274.40" cy="140.71" r="1.25" fill="#5580ff" stroke="none" stroke-width="1.00" />
<rect x="505.70" y="44.20" width="117.30" height="335.00" fill="#363636" />
<rect x="506.40" y="44.20" width="14.60" height="4.60" fill="#3a3a3a" />
<rect x="506.40" y="48.80" width="14.60" height="331.00" fill="#4a4a4a" />
<path d="M517.4 46.4l1.2 -1v2zM519 46.4l1.2 -1v2z" fill="#b8b8b8" stroke="none" stroke-width="1.00" />
<path d="M618.4 46.4l1.2 -1v2zM620 46.4l1.2 -1v2z" fill="#b8b8b8" stroke="none" stroke-width="1.00" />
<rect x="510.20" y="50.00" width="0.80" height="1.60" fill="#222222" />
<rect x="511.40" y="50.00" width="0.80" height="1.60" fill="#222222" />
<rect x="512.60" y="50.00" width="0.80" height="1.60" fill="#222222" />
<rect x="513.80" y="50.00" width="0.80" height="1.60" fill="#222222" />
<rect x="515.00" y="50.00" width="0.80" height="1.60" fill="#222222" />
<rect x="516.20" y="50.00" width="0.80" height="1.60" fill="#222222" />
<circle cx="514.40" cy="58.60" r="2.30" fill="#dcdcdc" stroke="none" stroke-width="1.00" />
<circle cx="514.40" cy="58.60" r="3.10" fill="none" stroke="#8a8a8a" stroke-width="0.90" stroke-dasharray="0.9 0.9" opacity="0.8"/>
<path d="M511.6 67.2v6.8h6.4q-0.6 -5.2 -6.4 -6.8z" fill="#606060" stroke="#dcdcdc" stroke-width="0.90" />
<rect x="510.20" y="78.80" width="0.80" height="1.60" fill="#222222" />
<rect x="511.40" y="78.80" width="0.80" height="1.60" fill="#222222" />
<rect x="512.60" y="78.80" width="0.80" height="1.60" fill="#222222" />
<rect x="513.80" y="78.80" width="0.80" height="1.60" fill="#222222" />
<rect x="515.00" y="78.80" width="0.80" height="1.60" fill="#222222" />
<rect x="516.20" y="78.80" width="0.80" height="1.60" fill="#222222" />
<rect x="511.60" y="84.40" width="4.80" height="2.20" fill="#dcdcdc" />
<rect x="511.60" y="87.80" width="6.40" height="2.40" fill="#dcdcdc" />
<rect x="511.20" y="96.00" width="4.20" height="4.00" fill="#dcdcdc" />
<rect x="513.40" y="98.00" width="4.20" height="4.00" fill="#8e8e8e" stroke="#dcdcdc" stroke-width="0.5"/>
<rect x="510.20" y="107.60" width="0.80" height="1.60" fill="#222222" />
<rect x="511.40" y="107.60" width="0.80" height="1.60" fill="#222222" />
<rect x="512.60" y="107.60" width="0.80" height="1.60" fill="#222222" />
<rect x="513.80" y="107.60" width="0.80" height="1.60" fill="#222222" />
<rect x="515.00" y="107.60" width="0.80" height="1.60" fill="#222222" />
<rect x="516.20" y="107.60" width="0.80" height="1.60" fill="#222222" />
<rect x="513.20" y="114.60" width="3.20" height="4.80" fill="#dcdcdc" />
<rect x="513.80" y="113.20" width="2.00" height="1.40" fill="#dcdcdc" />
<circle cx="512.20" cy="112.20" r="0.50" fill="#dcdcdc" stroke="none" stroke-width="1.00" />
<circle cx="514.60" cy="111.60" r="0.50" fill="#dcdcdc" stroke="none" stroke-width="1.00" />
<circle cx="516.80" cy="112.40" r="0.50" fill="#dcdcdc" stroke="none" stroke-width="1.00" />
<text x="514.50" y="130.80" font-size="10.50" fill="#dcdcdc" font-weight="normal" text-anchor="middle" style="font-family:DejaVu Sans,sans-serif">♣</text>
<rect x="510.20" y="136.00" width="0.80" height="1.60" fill="#222222" />
<rect x="511.40" y="136.00" width="0.80" height="1.60" fill="#222222" />
<rect x="512.60" y="136.00" width="0.80" height="1.60" fill="#222222" />
<rect x="513.80" y="136.00" width="0.80" height="1.60" fill="#222222" />
<rect x="515.00" y="136.00" width="0.80" height="1.60" fill="#222222" />
<rect x="516.20" y="136.00" width="0.80" height="1.60" fill="#222222" />
<text x="515.60" y="147.60" font-size="9.60" fill="#dcdcdc" font-weight="bold" text-anchor="middle" style="font-family:Liberation Serif,serif" font-style="italic">A</text>
<circle cx="512.20" cy="146.40" r="1.10" fill="none" stroke="#dcdcdc" stroke-width="0.50" />
<circle cx="515.80" cy="154.40" r="1.90" fill="#dcdcdc" stroke="none" stroke-width="1.00" />
<circle cx="513.00" cy="157.00" r="2.00" fill="#a8a8a8" stroke="#dcdcdc" stroke-width="0.40" />
<rect x="510.20" y="164.60" width="0.80" height="1.60" fill="#222222" />
<rect x="511.40" y="164.60" width="0.80" height="1.60" fill="#222222" />
<rect x="512.60" y="164.60" width="0.80" height="1.60" fill="#222222" />
<rect x="513.80" y="164.60" width="0.80" height="1.60" fill="#222222" />
<rect x="515.00" y="164.60" width="0.80" height="1.60" fill="#222222" />
<rect x="516.20" y="164.60" width="0.80" height="1.60" fill="#222222" />
<text x="514.60" y="177.20" font-size="10.00" fill="#dcdcdc" font-weight="bold" text-anchor="middle" style="font-family:Liberation Serif,serif" font-style="italic">A</text>
<path d="M511.4 176.6q-0.8 -1.8 0.8 -2.2" fill="none" stroke="#dcdcdc" stroke-width="0.50" />
<rect x="522.40" y="48.80" width="100.60" height="331.00" fill="#484848" />
<rect x="522.40" y="49.00" width="100.60" height="7.00" fill="#383838" />
<rect x="566.60" y="49.00" width="20.40" height="7.00" fill="#484848" />
<text x="525.80" y="54.40" font-size="4.40" fill="#c6c6c6" font-weight="bold" text-anchor="start" textLength="21" lengthAdjust="spacingAndGlyphs">Artboards</text>
<text x="553.00" y="54.40" font-size="4.40" fill="#c6c6c6" font-weight="bold" text-anchor="start" textLength="11" lengthAdjust="spacingAndGlyphs">Links</text>
<text x="570.00" y="54.40" font-size="4.40" fill="#ffffff" font-weight="bold" text-anchor="start" textLength="14.4" lengthAdjust="spacingAndGlyphs">Layers</text>
<path d="M614.50 51.80h1.40l-0.70 1.00z" fill="#c8c8c8" stroke="none" stroke-width="1.00" />
<rect x="616.40" y="51.00" width="3.40" height="0.60" fill="#c8c8c8" />
<rect x="616.40" y="52.20" width="3.40" height="0.60" fill="#c8c8c8" />
<rect x="616.40" y="53.40" width="3.40" height="0.60" fill="#c8c8c8" />
<rect x="522.40" y="56.00" width="100.60" height="68.40" fill="#424242" />
<rect x="524.80" y="57.20" width="94.00" height="58.80" fill="#484848" />
<rect x="524.80" y="58.40" width="94.00" height="9.20" fill="#56657c" />
<rect x="534.00" y="58.40" width="0.50" height="9.20" fill="#3a4456" />
<rect x="540.60" y="58.40" width="0.50" height="9.20" fill="#3a4456" />
<ellipse cx="529.8" cy="63" rx="2.2" ry="1.4" fill="none" stroke="#e0e0e0" stroke-width="0.6"/>
<circle cx="529.80" cy="63.00" r="0.70" fill="#e0e0e0" stroke="none" stroke-width="1.00" />
<rect x="543.40" y="58.40" width="0.90" height="9.20" fill="#3c6cff" />
<path d="M547.10 61.50v3.00l2.20 -1.50z" fill="#ffffff" stroke="none" stroke-width="1.00" />
<rect x="553.60" y="59.60" width="7.40" height="6.80" fill="#ffffff" />
<path d="M557.4 63.2c0.2 -0.8 1.2 -0.8 1.4 0c0.2 1 -1 1.8 -2 1.2c-1.2 -0.8 -1 -2.6 0.4 -3.0c1.6 -0.5 3 0.6 3 2.2" fill="none" stroke="#222" stroke-width="0.80" />
<text x="563.60" y="64.90" font-size="4.40" fill="#ffffff" font-weight="bold" text-anchor="start" textLength="14" lengthAdjust="spacingAndGlyphs">Layer 1</text>
<circle cx="609.40" cy="63.20" r="1.50" fill="none" stroke="#c8c8c8" stroke-width="0.50" />
<rect x="614.00" y="61.40" width="3.40" height="3.60" fill="#2a6cff" stroke="#dfe8ff" stroke-width="0.4"/>
<path d="M618.8 58.4v1.8l-1.8 -1.8z" fill="#ffffff" stroke="none" stroke-width="1.00" />
<text x="525.00" y="122.60" font-size="4.40" fill="#f0f0f0" font-weight="bold" text-anchor="start" textLength="14.6" lengthAdjust="spacingAndGlyphs">1 Layer</text>
<circle cx="566.00" cy="120.20" r="1.70" fill="none" stroke="#e8e8e8" stroke-width="0.70" />
<line x1="564.80" y1="121.40" x2="563.40" y2="123.00" stroke="#e8e8e8" stroke-width="0.80" />
<rect x="573.60" y="119.20" width="3.00" height="3.20" fill="#c8c8c8" />
<rect x="575.40" y="120.80" width="2.20" height="2.00" fill="#888" />
<path d="M584.6 119.4h4v3.2h-1.6v-1.8h-2.4z" fill="#d8d8d8" stroke="none" stroke-width="1.00" />
<rect x="596.00" y="119.20" width="3.40" height="3.60" fill="#d8d8d8" />
<rect x="597.00" y="120.40" width="1.40" height="2.40" fill="#484848" />
<rect x="606.80" y="119.60" width="2.80" height="3.20" fill="none" stroke="#6a6a6a" stroke-width="0.5"/>
<rect x="619.40" y="123.00" width="0.50" height="0.50" fill="#8a8a8a" />
<rect x="620.30" y="122.10" width="0.50" height="0.50" fill="#8a8a8a" />
<rect x="621.20" y="121.20" width="0.50" height="0.50" fill="#8a8a8a" />
<rect x="522.40" y="124.40" width="100.60" height="1.60" fill="#303030" />
<rect x="522.40" y="126.00" width="100.60" height="7.00" fill="#383838" />
<rect x="582.00" y="126.00" width="22.60" height="7.00" fill="#484848" />
<text x="525.40" y="131.40" font-size="4.40" fill="#c6c6c6" font-weight="bold" text-anchor="start" textLength="12.2" lengthAdjust="spacingAndGlyphs">Stroke</text>
<text x="542.00" y="131.40" font-size="4.40" fill="#c6c6c6" font-weight="bold" text-anchor="start" textLength="17.8" lengthAdjust="spacingAndGlyphs">Swatches</text>
<text x="563.00" y="131.40" font-size="4.40" fill="#c6c6c6" font-weight="bold" text-anchor="start" textLength="15.6" lengthAdjust="spacingAndGlyphs">Graphic</text>
<text x="584.60" y="131.40" font-size="4.40" fill="#ffffff" font-weight="bold" text-anchor="start" textLength="17.6" lengthAdjust="spacingAndGlyphs">Libraries</text>
<path d="M614.50 128.80h1.40l-0.70 1.00z" fill="#c8c8c8" stroke="none" stroke-width="1.00" />
<rect x="616.40" y="128.00" width="3.40" height="0.60" fill="#c8c8c8" />
<rect x="616.40" y="129.20" width="3.40" height="0.60" fill="#c8c8c8" />
<rect x="616.40" y="130.40" width="3.40" height="0.60" fill="#c8c8c8" />
<rect x="527.00" y="135.60" width="70.00" height="6.60" fill="#5c5c5c" rx="0.8"/>
<text x="531.00" y="140.60" font-size="4.40" fill="#ffffff" font-weight="bold" text-anchor="start" textLength="22" lengthAdjust="spacingAndGlyphs">My Library</text>
<path d="M591.90 138.30h2.20l-1.10 1.40z" fill="#e8e8e8" stroke="none" stroke-width="1.00" />
<rect x="600.60" y="135.60" width="6.40" height="6.60" fill="#2a2a2a" rx="0.6"/>
<rect x="601.50" y="136.60" width="2.00" height="2.00" fill="#f4f4f4" />
<rect x="601.50" y="139.20" width="2.00" height="2.00" fill="#f4f4f4" />
<rect x="604.10" y="136.60" width="2.00" height="2.00" fill="#f4f4f4" />
<rect x="604.10" y="139.20" width="2.00" height="2.00" fill="#f4f4f4" />
<rect x="611.40" y="136.60" width="5.20" height="1.20" fill="#9a9a9a" />
<rect x="611.40" y="138.40" width="5.20" height="1.20" fill="#9a9a9a" />
<rect x="611.40" y="140.20" width="5.20" height="1.20" fill="#9a9a9a" />
<rect x="524.00" y="145.40" width="93.20" height="47.40" fill="#4a4a4a" />
<rect x="617.20" y="145.40" width="5.00" height="47.40" fill="#3a3a3a" />
<path d="M618.50 149.20h2.60l-1.30 -1.60z" fill="#e8e8e8" stroke="none" stroke-width="1.00" />
<path d="M618.50 189.00h2.60l-1.30 1.60z" fill="#e8e8e8" stroke="none" stroke-width="1.00" />
<rect x="617.60" y="151.60" width="4.20" height="5.60" fill="#8c8c8c" />
<text x="527.40" y="152.80" font-size="4.40" fill="#ececec" font-weight="bold" text-anchor="start" textLength="13.2" lengthAdjust="spacingAndGlyphs">Colors</text>
<rect x="527.00" y="156.00" width="27.60" height="18.00" fill="#1a4cfb" />
<rect x="556.00" y="156.00" width="27.60" height="18.00" fill="#0b31d0" />
<rect x="585.00" y="156.00" width="27.60" height="18.00" fill="#cc6f6f" />
<text x="527.40" y="183.40" font-size="4.40" fill="#ececec" font-weight="bold" text-anchor="start" textLength="23.2" lengthAdjust="spacingAndGlyphs">Text Styles</text>
<rect x="527.00" y="186.40" width="27.60" height="5.80" fill="#ffffff" />
<rect x="556.00" y="186.40" width="27.60" height="5.80" fill="#ffffff" />
<path d="M536.2 192.2l0.8 -1.6l0.8 1.6zM565.4 192.2l0.8 -1.6l0.8 1.6z" fill="#111" stroke="none" stroke-width="1.00" />
<rect x="550.00" y="187.20" width="3.40" height="1.80" fill="#b01010" />
<rect x="522.40" y="192.80" width="100.60" height="9.60" fill="#424242" />
<path d="M528.6 199.8l0.8 -3.2l1.4 -1.2l0.6 2l1.2 0.4v2z" fill="none" stroke="#c8c8c8" stroke-width="0.60" />
<text x="540.80" y="200.60" font-size="6.40" fill="#a8a8a8" font-weight="normal" text-anchor="middle" style="font-family:Liberation Serif,serif">T</text>
<rect x="547.40" y="195.00" width="6.00" height="5.60" fill="#ffffff" />
<rect x="557.20" y="195.00" width="6.00" height="5.60" fill="#1c1c1c" stroke="#8a8a8a" stroke-width="0.6"/>
<ellipse cx="605" cy="198" rx="3.2" ry="2.0" fill="#8e8e8e"/>
<circle cx="605.00" cy="198.00" r="1.00" fill="#d8d8d8" stroke="none" stroke-width="1.00" />
<rect x="613.40" y="196.40" width="2.80" height="3.80" fill="none" stroke="#6a6a6a" stroke-width="0.5"/>
<rect x="612.80" y="195.60" width="4.00" height="0.60" fill="#6a6a6a" />
<rect x="522.40" y="202.40" width="100.60" height="1.20" fill="#303030" />
<rect x="522.40" y="203.60" width="100.60" height="6.80" fill="#383838" />
<rect x="575.00" y="203.60" width="26.00" height="6.80" fill="#484848" />
<text x="525.40" y="208.80" font-size="4.40" fill="#c6c6c6" font-weight="bold" text-anchor="start" textLength="11.2" lengthAdjust="spacingAndGlyphs">Color</text>
<text x="543.00" y="208.80" font-size="4.40" fill="#c6c6c6" font-weight="bold" text-anchor="start" textLength="29" lengthAdjust="spacingAndGlyphs">Transparency</text>
<rect x="577.00" y="205.40" width="0.60" height="1.20" fill="#d0d0d0" />
<rect x="577.00" y="207.40" width="0.60" height="1.20" fill="#d0d0d0" />
<text x="580.00" y="208.80" font-size="4.40" fill="#ffffff" font-weight="bold" text-anchor="start" textLength="18.6" lengthAdjust="spacingAndGlyphs">Gradient</text>
<path d="M614.50 206.40h1.40l-0.70 1.00z" fill="#c8c8c8" stroke="none" stroke-width="1.00" />
<rect x="616.40" y="205.60" width="3.40" height="0.60" fill="#c8c8c8" />
<rect x="616.40" y="206.80" width="3.40" height="0.60" fill="#c8c8c8" />
<rect x="616.40" y="208.00" width="3.40" height="0.60" fill="#c8c8c8" />
<rect x="525.40" y="214.00" width="10.60" height="11.00" fill="url(#gw)" stroke="#bdbdbd" stroke-width="0.5"/>
<path d="M539.80 219.30h1.60l-0.80 1.00z" fill="#e0e0e0" stroke="none" stroke-width="1.00" />
<text x="548.60" y="219.40" font-size="4.40" fill="#f0f0f0" font-weight="bold" text-anchor="start" textLength="10" lengthAdjust="spacingAndGlyphs">Type:</text>
<rect x="562.00" y="214.40" width="56.60" height="5.80" fill="#5c5c5c" rx="0.6"/>
<path d="M614.90 216.70h2.20l-1.10 1.40z" fill="#e8e8e8" stroke="none" stroke-width="1.00" />
<text x="546.00" y="230.40" font-size="4.40" fill="#8e8e8e" font-weight="bold" text-anchor="start" textLength="12.6" lengthAdjust="spacingAndGlyphs">Stroke:</text>
<rect x="562.00" y="225.20" width="7.80" height="6.40" fill="none" rx="0.6" stroke="#686868" stroke-width="0.6"/>
<path d="M564.20 230.2v-3.2h3.2" fill="none" stroke="#707070" stroke-width="0.80" />
<rect x="571.80" y="225.20" width="7.80" height="6.40" fill="none" rx="0.6" stroke="#686868" stroke-width="0.6"/>
<path d="M574.00 230.2v-3.2h3.2" fill="none" stroke="#707070" stroke-width="0.80" />
<rect x="581.40" y="225.20" width="7.80" height="6.40" fill="none" rx="0.6" stroke="#686868" stroke-width="0.6"/>
<path d="M583.60 230.2v-3.2h3.2" fill="none" stroke="#707070" stroke-width="0.80" />
<rect x="529.40" y="233.00" width="8.60" height="8.20" fill="#202020" rx="1.2" stroke="#9a9a9a" stroke-width="0.5"/>
<rect x="531.80" y="235.40" width="3.80" height="3.60" fill="#484848" stroke="#8a8a8a" stroke-width="0.4"/>
<rect x="525.40" y="229.00" width="7.60" height="7.40" fill="#ffffff" stroke="#e0e0e0" stroke-width="0.4"/>
<line x1="525.80" y1="236.00" x2="532.60" y2="229.40" stroke="#e02020" stroke-width="1.10" />
<rect x="562.00" y="236.00" width="25.00" height="6.40" fill="#6c6c6c" />
<rect x="587.40" y="236.00" width="4.80" height="6.40" fill="#606060" />
<path d="M588.70 238.65h2.40l-1.20 1.50z" fill="#c4c4c4" stroke="none" stroke-width="1.00" />
<rect x="562.00" y="246.40" width="25.00" height="6.40" fill="#6c6c6c" />
<rect x="587.40" y="246.40" width="4.80" height="6.40" fill="#606060" />
<path d="M588.70 249.05h2.40l-1.20 1.50z" fill="#c4c4c4" stroke="none" stroke-width="1.00" />
<path d="M553.6 241.0l3.2 -3.6M553.6 241.0h3.6" fill="none" stroke="#6e6e6e" stroke-width="0.60" />
<path d="M553.4 247.6v4h4M555.2 248.4h2.6v2.4h-2.6z" fill="none" stroke="#6e6e6e" stroke-width="0.60" />
<rect x="529.00" y="245.60" width="4.60" height="0.60" fill="#5e5e5e" />
<rect x="529.00" y="247.40" width="4.60" height="0.60" fill="#5e5e5e" />
<rect x="529.00" y="249.20" width="4.60" height="0.60" fill="#5e5e5e" />
<rect x="531.00" y="244.80" width="0.60" height="6.00" fill="#5e5e5e" />
<rect x="526.60" y="259.60" width="80.80" height="8.00" fill="url(#gw)" stroke="#a8a8a8" stroke-width="0.5"/>
<rect x="613.40" y="262.80" width="2.60" height="3.40" fill="none" stroke="#6a6a6a" stroke-width="0.5"/>
<rect x="612.80" y="262.00" width="3.80" height="0.60" fill="#6a6a6a" />
<text x="543.00" y="284.80" font-size="4.40" fill="#8e8e8e" font-weight="bold" text-anchor="start" textLength="15.8" lengthAdjust="spacingAndGlyphs">Opacity:</text>
<text x="541.40" y="295.40" font-size="4.40" fill="#8e8e8e" font-weight="bold" text-anchor="start" textLength="17.4" lengthAdjust="spacingAndGlyphs">Location:</text>
<rect x="562.00" y="279.60" width="25.00" height="6.40" fill="#6c6c6c" />
<rect x="587.40" y="279.60" width="4.80" height="6.40" fill="#606060" />
<path d="M588.70 282.25h2.40l-1.20 1.50z" fill="#c4c4c4" stroke="none" stroke-width="1.00" />
<rect x="562.00" y="290.40" width="25.00" height="6.40" fill="#6c6c6c" />
<rect x="587.40" y="290.40" width="4.80" height="6.40" fill="#606060" />
<path d="M588.70 293.05h2.40l-1.20 1.50z" fill="#c4c4c4" stroke="none" stroke-width="1.00" />
<rect x="522.40" y="300.00" width="100.60" height="1.00" fill="#303030" />
<rect x="522.40" y="301.00" width="100.60" height="6.80" fill="#383838" />
<rect x="523.00" y="301.00" width="29.00" height="6.80" fill="#484848" />
<rect x="525.20" y="302.80" width="0.60" height="1.20" fill="#d0d0d0" />
<rect x="525.20" y="304.80" width="0.60" height="1.20" fill="#d0d0d0" />
<text x="528.00" y="306.30" font-size="4.40" fill="#ffffff" font-weight="bold" text-anchor="start" textLength="22" lengthAdjust="spacingAndGlyphs">Transform</text>
<path d="M614.50 303.80h1.40l-0.70 1.00z" fill="#c8c8c8" stroke="none" stroke-width="1.00" />
<rect x="616.40" y="303.00" width="3.40" height="0.60" fill="#c8c8c8" />
<rect x="616.40" y="304.20" width="3.40" height="0.60" fill="#c8c8c8" />
<rect x="616.40" y="305.40" width="3.40" height="0.60" fill="#c8c8c8" />
<rect x="522.40" y="307.80" width="100.60" height="2.40" fill="#303030" />
<rect x="522.40" y="310.20" width="100.60" height="6.80" fill="#383838" />
<rect x="523.00" y="310.20" width="27.40" height="6.80" fill="#484848" />
<rect x="525.20" y="312.00" width="0.60" height="1.20" fill="#d0d0d0" />
<rect x="525.20" y="314.00" width="0.60" height="1.20" fill="#d0d0d0" />
<text x="528.00" y="315.50" font-size="4.40" fill="#ffffff" font-weight="bold" text-anchor="start" textLength="20.6" lengthAdjust="spacingAndGlyphs">Character</text>
<text x="554.00" y="315.50" font-size="4.40" fill="#c6c6c6" font-weight="bold" text-anchor="start" textLength="22" lengthAdjust="spacingAndGlyphs">Paragraph</text>
<text x="581.40" y="315.50" font-size="4.40" fill="#c6c6c6" font-weight="bold" text-anchor="start" textLength="21.6" lengthAdjust="spacingAndGlyphs">OpenType</text>
<path d="M614.50 313.00h1.40l-0.70 1.00z" fill="#c8c8c8" stroke="none" stroke-width="1.00" />
<rect x="616.40" y="312.20" width="3.40" height="0.60" fill="#c8c8c8" />
<rect x="616.40" y="313.40" width="3.40" height="0.60" fill="#c8c8c8" />
<rect x="616.40" y="314.60" width="3.40" height="0.60" fill="#c8c8c8" />
<rect x="526.00" y="320.40" width="49.00" height="8.60" fill="#5a5a5a" rx="0.8" stroke="#6e6e6e" stroke-width="0.5"/>
<rect x="528.60" y="322.00" width="5.00" height="5.40" fill="none" stroke="#d8d8d8" stroke-width="0.5"/>
<text x="531.10" y="326.60" font-size="4.40" fill="#e8e8e8" font-weight="normal" text-anchor="middle" style="font-family:Liberation Serif,serif">T</text>
<rect x="528.00" y="321.40" width="1.20" height="1.20" fill="#e8e8e8" />
<rect x="533.00" y="321.40" width="1.20" height="1.20" fill="#e8e8e8" />
<rect x="528.00" y="326.80" width="1.20" height="1.20" fill="#e8e8e8" />
<rect x="533.00" y="326.80" width="1.20" height="1.20" fill="#e8e8e8" />
<text x="538.00" y="326.60" font-size="4.40" fill="#f0f0f0" font-weight="bold" text-anchor="start" textLength="34" lengthAdjust="spacingAndGlyphs">Touch Type Tool</text>
<rect x="526.00" y="333.00" width="86.00" height="7.00" fill="#9c9c9c" />
<circle cx="530.20" cy="336.00" r="1.50" fill="none" stroke="#333" stroke-width="0.60" />
<line x1="531.20" y1="337.20" x2="532.20" y2="338.60" stroke="#333" stroke-width="0.60" />
<path d="M532.90 337.15h1.40l-0.70 0.90z" fill="#333" stroke="none" stroke-width="1.00" />
<text x="536.00" y="338.30" font-size="4.70" fill="#141414" font-weight="bold" text-anchor="start" textLength="20.6" lengthAdjust="spacingAndGlyphs">Myriad Pro</text>
<rect x="614.00" y="333.40" width="5.00" height="6.20" fill="#343434" rx="0.6"/>
<path d="M615.15 335.85h2.70l-1.35 1.70z" fill="#ececec" stroke="none" stroke-width="1.00" />
<rect x="526.00" y="344.00" width="86.00" height="7.00" fill="#9c9c9c" />
<text x="526.80" y="349.30" font-size="4.70" fill="#141414" font-weight="bold" text-anchor="start" textLength="15.2" lengthAdjust="spacingAndGlyphs">Regular</text>
<rect x="614.00" y="344.40" width="5.00" height="6.20" fill="#343434" rx="0.6"/>
<path d="M615.15 346.85h2.70l-1.35 1.70z" fill="#ececec" stroke="none" stroke-width="1.00" />
<rect x="536.00" y="358.00" width="4.00" height="6.40" fill="#2e2e2e" rx="0.5"/>
<path d="M537.00 360.33h2.00l-1.00 -1.20z" fill="#dddddd" stroke="none" stroke-width="1.00" />
<path d="M537.00 362.07h2.00l-1.00 1.20z" fill="#dddddd" stroke="none" stroke-width="1.00" />
<rect x="541.40" y="358.00" width="21.60" height="6.40" fill="#9c9c9c" />
<text x="542.40" y="362.90" font-size="4.60" fill="#141414" font-weight="bold" text-anchor="start" >12 pt</text>
<rect x="564.60" y="358.00" width="4.00" height="6.40" fill="#343434" rx="0.6"/>
<path d="M565.25 360.55h2.70l-1.35 1.70z" fill="#ececec" stroke="none" stroke-width="1.00" />
<rect x="586.00" y="358.00" width="4.00" height="6.40" fill="#2e2e2e" rx="0.5"/>
<path d="M587.00 360.33h2.00l-1.00 -1.20z" fill="#dddddd" stroke="none" stroke-width="1.00" />
<path d="M587.00 362.07h2.00l-1.00 1.20z" fill="#dddddd" stroke="none" stroke-width="1.00" />
<rect x="591.40" y="358.00" width="21.60" height="6.40" fill="#9c9c9c" />
<text x="592.20" y="362.90" font-size="4.60" fill="#141414" font-weight="bold" text-anchor="start" textLength="19.6" lengthAdjust="spacingAndGlyphs">(14.4 pt)</text>
<rect x="614.60" y="358.00" width="4.00" height="6.40" fill="#343434" rx="0.6"/>
<path d="M615.25 360.55h2.70l-1.35 1.70z" fill="#ececec" stroke="none" stroke-width="1.00" />
<rect x="536.00" y="368.60" width="4.00" height="6.40" fill="#2e2e2e" rx="0.5"/>
<path d="M537.00 370.93h2.00l-1.00 -1.20z" fill="#dddddd" stroke="none" stroke-width="1.00" />
<path d="M537.00 372.67h2.00l-1.00 1.20z" fill="#dddddd" stroke="none" stroke-width="1.00" />
<rect x="541.40" y="368.60" width="21.60" height="6.40" fill="#9c9c9c" />
<text x="542.40" y="373.50" font-size="4.60" fill="#141414" font-weight="bold" text-anchor="start" >Auto</text>
<rect x="564.60" y="368.60" width="4.00" height="6.40" fill="#343434" rx="0.6"/>
<path d="M565.25 371.15h2.70l-1.35 1.70z" fill="#ececec" stroke="none" stroke-width="1.00" />
<rect x="586.00" y="368.60" width="4.00" height="6.40" fill="#2e2e2e" rx="0.5"/>
<path d="M587.00 370.93h2.00l-1.00 -1.20z" fill="#dddddd" stroke="none" stroke-width="1.00" />
<path d="M587.00 372.67h2.00l-1.00 1.20z" fill="#dddddd" stroke="none" stroke-width="1.00" />
<rect x="591.40" y="368.60" width="21.60" height="6.40" fill="#9c9c9c" />
<text x="592.20" y="373.50" font-size="4.60" fill="#141414" font-weight="bold" text-anchor="start" >0</text>
<rect x="614.60" y="368.60" width="4.00" height="6.40" fill="#343434" rx="0.6"/>
<path d="M615.25 371.15h2.70l-1.35 1.70z" fill="#ececec" stroke="none" stroke-width="1.00" />
<text x="528.00" y="363.80" font-size="4.40" fill="#dcdcdc" font-weight="normal" text-anchor="middle" style="font-family:Liberation Serif,serif">T</text>
<text x="530.60" y="364.20" font-size="6.80" fill="#dcdcdc" font-weight="normal" text-anchor="middle" style="font-family:Liberation Serif,serif">T</text>
<text x="580.00" y="364.40" font-size="4.40" fill="#dcdcdc" font-weight="normal" text-anchor="middle" style="font-family:Liberation Serif,serif">A</text>
<text x="580.00" y="360.80" font-size="4.40" fill="#dcdcdc" font-weight="normal" text-anchor="middle" style="font-family:Liberation Serif,serif">A</text>
<path d="M576.8 359v5M576 360l0.8 -1l0.8 1M576 363l0.8 1l0.8 -1" fill="none" stroke="#dcdcdc" stroke-width="0.40" />
<text x="529.60" y="374.20" font-size="4.40" fill="#dcdcdc" font-weight="normal" text-anchor="middle" style="font-family:Liberation Serif,serif">VA</text>
<path d="M527 375.4l5.4 -5" fill="none" stroke="#dcdcdc" stroke-width="0.40" />
<text x="579.40" y="373.00" font-size="4.40" fill="#dcdcdc" font-weight="normal" text-anchor="middle" style="font-family:Liberation Serif,serif">VA</text>
<path d="M576 374.6h7" fill="none" stroke="#dcdcdc" stroke-width="0.50" />
<rect x="575.60" y="368.80" width="7.60" height="4.80" fill="none" stroke="#bdbdbd" stroke-width="0.3"/>
<rect x="163" y="45" width="62" height="98.4" fill="#000" opacity="0.3" filter="url(#blur2)"/>
<rect x="162.50" y="43.80" width="61.70" height="98.00" fill="#464646" />
<rect x="166.10" y="43.80" width="55.00" height="12.00" fill="#e9e9e9" />
<rect x="166.10" y="55.80" width="55.00" height="1.20" fill="#b4b4b4" />
<rect x="166.10" y="57.00" width="55.00" height="12.00" fill="#e9e9e9" />
<rect x="166.10" y="69.00" width="55.00" height="1.20" fill="#b4b4b4" />
<rect x="166.10" y="70.20" width="55.00" height="11.70" fill="#e9e9e9" />
<rect x="166.10" y="81.90" width="55.00" height="1.20" fill="#b4b4b4" />
<rect x="166.10" y="83.10" width="55.00" height="11.70" fill="#e9e9e9" />
<rect x="166.10" y="94.80" width="55.00" height="1.20" fill="#b4b4b4" />
<rect x="166.10" y="96.00" width="55.00" height="11.70" fill="#e9e9e9" />
<rect x="166.10" y="107.70" width="55.00" height="1.20" fill="#b4b4b4" />
<rect x="166.10" y="108.90" width="55.00" height="11.70" fill="#e9e9e9" />
<rect x="166.10" y="120.60" width="55.00" height="1.20" fill="#b4b4b4" />
<rect x="166.10" y="121.80" width="55.00" height="10.40" fill="#e9e9e9" />
<rect x="166.10" y="132.20" width="55.00" height="1.20" fill="#b4b4b4" />
<rect x="168.00" y="49.40" width="33.00" height="1.30" fill="#5a5a5a" />
<text x="203.30" y="52.00" font-size="4.70" fill="#444444" font-weight="bold" text-anchor="start" textLength="15.6" lengthAdjust="spacingAndGlyphs">Uniform</text>
<path d="M172 63.1Q193.6 54.3 215.2 63.1Q193.6 71.9 172 63.1Z" fill="#000" stroke="none" stroke-width="1.00" />
<path d="M172 75.8C176 73 180 72.2 183 73.4C187 75 189 75.2 193 73.2C199 70.6 208 72.6 215.2 75.8C208 79 199 81 193 78.4C189 76.4 187 76.6 183 78.2C180 79.4 176 78.6 172 75.8Z" fill="#000" stroke="none" stroke-width="1.00" />
<path d="M172 88.8L177.4 85.4H208.6L214.4 88.8L208.6 92.2H177.4Z" fill="#000" stroke="none" stroke-width="1.00" />
<path d="M175.2 96.9L214.8 101.6L175.2 105.6Z" fill="#000" stroke="none" stroke-width="1.00" />
<path d="M171.2 113.7C178 112.6 192 110.8 201 110.8C206 110.8 211 112.2 215.4 113.9C211 115.9 206 117.5 201 117.5C192 117.5 178 114.9 171.2 113.7Z" fill="#000" stroke="none" stroke-width="1.00" />
<path d="M171.6 132.2Q174 126.6 184 124.2Q194 122.2 204 124.2Q213.6 126.6 216.2 132.2Z" fill="#000" stroke="none" stroke-width="1.00" />
<rect x="164.60" y="107.60" width="57.40" height="10.60" fill="none" stroke="#22dc22" stroke-width="1.8"/>
<rect x="162.50" y="133.20" width="61.70" height="8.60" fill="#464646" />
<path d="M192.6 139.4h4M194.6 135.6v2.6M193.4 137.2l1.2 1.2l1.2 -1.2" fill="none" stroke="#6e6e6e" stroke-width="0.60" />
<rect x="203.00" y="136.40" width="3.40" height="3.60" fill="#d8d8d8" />
<rect x="202.40" y="135.60" width="4.60" height="0.70" fill="#d8d8d8" />
<rect x="204.00" y="135.00" width="1.40" height="0.60" fill="#d8d8d8" />
<path d="M214.4 137.8a2 2 0 1 0 2 -2" fill="none" stroke="#e0e0e0" stroke-width="0.80" />
<path d="M216.6 134.4l-1.8 1.4l1.8 1.4z" fill="#e0e0e0" stroke="none" stroke-width="1.00" />
</g>
</svg>
</body></html>
